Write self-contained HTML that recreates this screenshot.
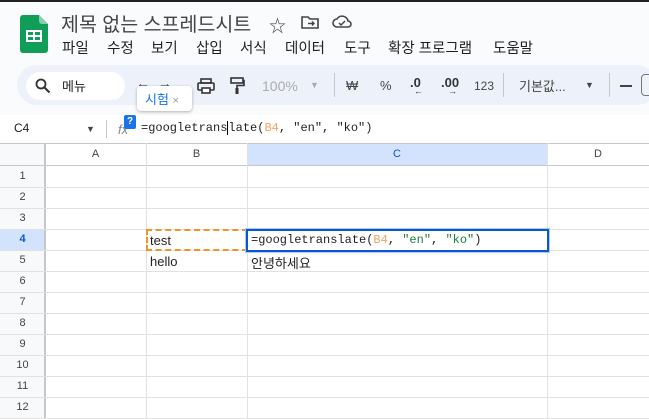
<!DOCTYPE html><html><head><meta charset="utf-8"><style>
*{margin:0;padding:0;box-sizing:border-box}
body{width:649px;height:419px;overflow:hidden;background:#f9fbfd;font-family:"Liberation Sans","Noto Sans CJK KR",sans-serif;position:relative;color:#1f1f1f}
.a{position:absolute;white-space:nowrap}
.mono{font-family:"Liberation Mono","Noto Sans CJK KR",monospace}
.hl{position:absolute;height:1px;background:#e1e1e1}
.vl{position:absolute;width:1px;background:#e1e1e1}
.rn{position:absolute;left:0;width:45px;text-align:center;font-size:11px;color:#444}
.m{position:absolute;top:37px;font-size:14.5px;white-space:nowrap}
</style></head><body>
<div class="a" style="left:0;top:0;width:649px;height:2px;background:#222"></div>
<svg class="a" style="left:20px;top:15px" width="28" height="38" viewBox="0 0 28 38"><path d="M3 0h16l9 9v26a3 3 0 0 1-3 3H3a3 3 0 0 1-3-3V3a3 3 0 0 1 3-3z" fill="#0f9d58"/><path d="M19 0l9 9h-6a3 3 0 0 1-3-3z" fill="#87ceac"/><rect x="6" y="15" width="16" height="12" fill="#fff"/><rect x="8" y="17" width="5" height="3" fill="#0f9d58"/><rect x="15" y="17" width="5" height="3" fill="#0f9d58"/><rect x="8" y="22" width="5" height="3" fill="#0f9d58"/><rect x="15" y="22" width="5" height="3" fill="#0f9d58"/></svg>
<div class="a" style="left:61px;top:8px;font-size:19.5px;color:#444">제목 없는 스프레드시트</div>
<div class="a" style="left:269px;top:12px;font-size:17px;color:#444">☆</div>
<svg class="a" style="left:301px;top:15px" width="18" height="14"><path d="M1 2h6l2 2h8v9H1z" fill="none" stroke="#444" stroke-width="1.6"/><path d="M7 8.5h6M11 6.5l2 2-2 2" fill="none" stroke="#444" stroke-width="1.4"/></svg>
<svg class="a" style="left:332px;top:14px" width="20" height="15"><path d="M5 13a4 4 0 0 1 0-8 6 6 0 0 1 11 2 3 3 0 0 1 0 6z" fill="none" stroke="#444" stroke-width="1.6"/><path d="M7 9l2 2 4-4" fill="none" stroke="#444" stroke-width="1.5"/></svg>
<div class="m" style="left:62px">파일</div><div class="m" style="left:107px">수정</div><div class="m" style="left:151px">보기</div><div class="m" style="left:196px">삽입</div><div class="m" style="left:240px">서식</div><div class="m" style="left:285px">데이터</div><div class="m" style="left:344px">도구</div><div class="m" style="left:388px">확장 프로그램</div><div class="m" style="left:493px">도움말</div>
<div class="a" style="left:17px;top:65px;width:640px;height:40px;background:#edf2fa;border-radius:20px"></div>
<div class="a" style="left:26px;top:72px;width:99px;height:28px;background:#fff;border-radius:14px"></div>
<svg class="a" style="left:35px;top:78px" width="16" height="16"><circle cx="6" cy="6" r="4.5" fill="none" stroke="#333" stroke-width="1.8"/><path d="M9.5 9.5l5 5" stroke="#333" stroke-width="2"/></svg>
<div class="a" style="left:62px;top:76px;font-size:13px">메뉴</div>
<div class="a" style="left:136px;top:75px;font-size:14px;color:#444">← &nbsp;→</div>
<svg class="a" style="left:197px;top:78px" width="18" height="16"><rect x="4" y="1" width="10" height="4" fill="none" stroke="#333" stroke-width="1.6"/><rect x="1" y="5" width="16" height="7" rx="1" fill="none" stroke="#333" stroke-width="1.6"/><rect x="5" y="10" width="8" height="5" fill="#fff" stroke="#333" stroke-width="1.6"/></svg>
<svg class="a" style="left:229px;top:77px" width="16" height="18"><rect x="2" y="1" width="12" height="5" fill="none" stroke="#333" stroke-width="1.6"/><path d="M14 3.5h1v5H8v3" fill="none" stroke="#333" stroke-width="1.6"/><rect x="6.5" y="11" width="3" height="6" fill="#333"/></svg>
<div class="a" style="left:262px;top:78px;font-size:14px;color:#aaa">100%</div>
<div class="a" style="left:310px;top:80px;font-size:9px;color:#aaa">▼</div>
<div class="a" style="left:334px;top:73px;width:1px;height:24px;background:#c7c7c7"></div>
<div class="a" style="left:346px;top:78px;font-size:13px;color:#444">₩</div>
<div class="a" style="left:380px;top:78px;font-size:13px;color:#444">%</div>
<div class="a" style="left:410px;top:75px;font-size:13px;color:#333;font-weight:bold">.0</div>
<div class="a" style="left:414px;top:86px;font-size:9px;color:#333">←</div>
<div class="a" style="left:441px;top:75px;font-size:13px;color:#333;font-weight:bold">.00</div>
<div class="a" style="left:448px;top:86px;font-size:9px;color:#333">→</div>
<div class="a" style="left:474px;top:79px;font-size:12px;color:#444">123</div>
<div class="a" style="left:503px;top:73px;width:1px;height:24px;background:#c7c7c7"></div>
<div class="a" style="left:519px;top:76px;font-size:13px;color:#444">기본값...</div>
<div class="a" style="left:585px;top:80px;font-size:9px;color:#444">▼</div>
<div class="a" style="left:609px;top:73px;width:1px;height:24px;background:#c7c7c7"></div>
<div class="a" style="left:620px;top:85px;width:12px;height:2px;background:#444"></div>
<div class="a" style="left:641px;top:74px;width:14px;height:22px;border:1px solid #777;border-radius:4px"></div>
<div class="a" style="left:0;top:115px;width:649px;height:28px;background:#fff"></div>
<div class="a" style="left:14px;top:121px;font-size:12px">C4</div>
<div class="a" style="left:86px;top:124px;font-size:9px;color:#444">▼</div>
<div class="a" style="left:106px;top:120px;width:1px;height:18px;background:#c7c7c7"></div>
<div class="a" style="left:118px;top:122px;font-size:13px;color:#888;font-style:italic">fx</div>
<div class="a mono" style="left:141px;top:121px;font-size:12px">=googletrans<span style="border-left:1px solid #000"></span>late(<span style="color:#f4a261">B4</span>, "en", "ko")</div>
<div class="a" style="left:137px;top:86px;width:55px;height:25px;background:#fff;border-radius:4px;box-shadow:0 1px 3px rgba(0,0,0,.3)"></div>
<div class="a" style="left:145px;top:89px;font-size:13px;color:#1a73e8">시험 <span style="font-size:11px;color:#999">×</span></div>
<div class="a" style="left:124px;top:115px;width:12px;height:14px;background:#1a73e8;border-radius:2px;color:#fff;font-size:10px;font-weight:bold;text-align:center;line-height:14px">?</div>
<div class="a" style="left:0;top:143px;width:649px;height:276px;background:#fff"></div>
<div class="a" style="left:0;top:143px;width:45px;height:276px;background:#f8f9fa"></div>
<div class="a" style="left:247px;top:143px;width:300px;height:23px;background:#d3e3fd"></div>
<div class="a" style="left:0;top:229px;width:45px;height:21px;background:#d3e3fd"></div>
<div class="a" style="left:0;top:143px;width:649px;height:1px;background:#c7c7c7"></div>
<div class="a" style="left:0;top:165px;width:649px;height:1px;background:#c7c7c7"></div>
<div class="a" style="left:44px;top:143px;width:2px;height:276px;background:#c7c7c7"></div>
<div class="vl" style="left:146px;top:143px;height:276px"></div>
<div class="vl" style="left:247px;top:143px;height:276px"></div>
<div class="vl" style="left:547px;top:143px;height:276px"></div>
<div class="a" style="left:45px;top:148px;width:101px;text-align:center;font-size:11px;color:#444">A</div>
<div class="a" style="left:146px;top:148px;width:101px;text-align:center;font-size:11px;color:#444">B</div>
<div class="a" style="left:247px;top:148px;width:300px;text-align:center;font-size:11px;color:#0b57d0">C</div>
<div class="a" style="left:547px;top:148px;width:102px;text-align:center;font-size:11px;color:#444">D</div>
<div class="hl" style="left:0;top:187px;width:649px"></div>
<div class="hl" style="left:0;top:208px;width:649px"></div>
<div class="hl" style="left:0;top:229px;width:649px"></div>
<div class="hl" style="left:0;top:250px;width:649px"></div>
<div class="hl" style="left:0;top:271px;width:649px"></div>
<div class="hl" style="left:0;top:292px;width:649px"></div>
<div class="hl" style="left:0;top:313px;width:649px"></div>
<div class="hl" style="left:0;top:334px;width:649px"></div>
<div class="hl" style="left:0;top:355px;width:649px"></div>
<div class="hl" style="left:0;top:376px;width:649px"></div>
<div class="hl" style="left:0;top:397px;width:649px"></div>
<div class="hl" style="left:0;top:418px;width:649px"></div>
<div class="rn" style="top:170px">1</div><div class="rn" style="top:191px">2</div><div class="rn" style="top:212px">3</div>
<div class="rn" style="top:233px;color:#0b57d0;font-weight:bold">4</div><div class="rn" style="top:254px">5</div><div class="rn" style="top:275px">6</div>
<div class="rn" style="top:296px">7</div><div class="rn" style="top:317px">8</div><div class="rn" style="top:338px">9</div>
<div class="rn" style="top:359px">10</div><div class="rn" style="top:380px">11</div><div class="rn" style="top:401px">12</div>
<div class="a" style="left:146px;top:229px;width:102px;height:22px;border:2px dashed #f29423"></div>
<div class="a" style="left:150px;top:233px;font-size:13px">test</div>
<div class="a" style="left:150px;top:254px;font-size:13px">hello</div>
<div class="a" style="left:246px;top:229px;width:303px;height:23px;border:2px solid #0b57d0;box-shadow:0 0 0 1px #a8c7fa;background:#fff"></div>
<div class="a mono" style="left:251px;top:233px;font-size:12px">=googletranslate(<span style="color:#f4a261">B4</span>, <span style="color:#188038">"en"</span>, <span style="color:#188038">"ko"</span>)</div>
<div class="a" style="left:251px;top:253px;font-size:13px">안녕하세요</div>
</body></html>
